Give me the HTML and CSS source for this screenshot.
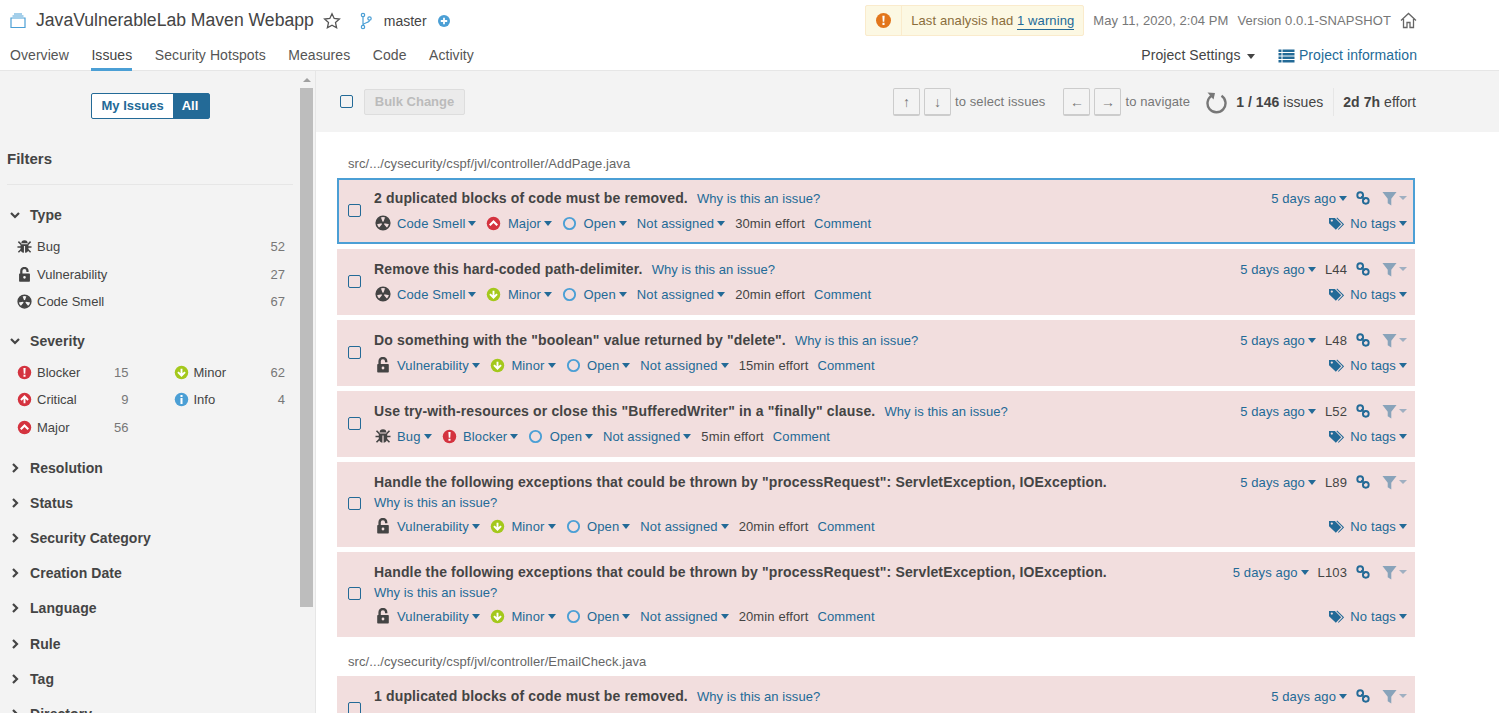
FILE: index.html
```html
<!DOCTYPE html>
<html lang="en">
<head>
    <meta charset="UTF-8">
    <title>Issues - JavaVulnerableLab Maven Webapp</title>
    <link rel="stylesheet" href="styles.css">
</head>
<body>

    <svg class="defs" width="0" height="0">
        <symbol id="i-bug" viewBox="0 0 16 16"><path d="M4.6 4.6a3.4 3.4 0 0 1 6.8 0z"/><path d="M3.8 5.6h8.4v5a4.2 4.2 0 0 1-3.6 4.1V7.5H7.4v7.2a4.2 4.2 0 0 1-3.6-4.1z"/><path d="M1.5 2.8l3 3M14.5 2.8l-3 3M.5 8.5h4M15.500 8.500h-4M1.5 14.2l3-3M14.5 14.2l-3-3" stroke="currentColor" stroke-width="1.6" fill="none"/></symbol>
        <symbol id="i-lock" viewBox="0 0 16 16"><path fill-rule="evenodd" d="M3 7h10a.8.8 0 0 1 .8.8v7a.8.8 0 0 1-.8.8H3a.8.8 0 0 1-.8-.8v-7A.8.8 0 0 1 3 7zM8 9.600a1.400 1.400 0 1 0 0 2.800 1.400 1.400 0 0 0 0-2.800z"/><path d="M4.600 7.500V4.300a3.300 3.300 0 0 1 6.600 0v.9" stroke="currentColor" stroke-width="2.400" fill="none"/></symbol>
        <symbol id="i-smell" viewBox="0 0 16 16"><circle cx="8" cy="8" r="6.8" fill="none" stroke="currentColor" stroke-width="1.6"/><circle cx="8" cy="8" r="1.5"/><path d="M8 8L5.78 1.89A6.500 6.500 0 0 0 1.6 9.13zM8 8l6.400 1.130A6.500 6.500 0 0 0 10.22 1.89zM8 8l4.180 4.980A6.500 6.500 0 0 1 3.820 12.980z"/></symbol>
        <symbol id="i-blocker" viewBox="0 0 16 16"><circle cx="8" cy="8" r="7.2" fill="#d4333f"/><path d="M6.8 3.200h2.400l-.4 6H7.200zM6.900 10.300h2.200v2.300H6.900z" fill="#fff"/></symbol>
        <symbol id="i-critical" viewBox="0 0 16 16"><circle cx="8" cy="8" r="7.2" fill="#d4333f"/><path d="M8 3.300l4.500 4.500-1.400 1.400L9 7.100v5H7v-5L4.900 9.200 3.500 7.800z" fill="#fff"/></symbol>
        <symbol id="i-major" viewBox="0 0 16 16"><circle cx="8" cy="8" r="7.2" fill="#d4333f"/><path d="M8 4.300l4.800 4.800-1.600 1.600L8 7.500l-3.200 3.200-1.600-1.600z" fill="#fff"/></symbol>
        <symbol id="i-minor" viewBox="0 0 16 16"><circle cx="8" cy="8" r="7.2" fill="#a4c81c"/><path d="M8 12.700L3.500 8.200l1.400-1.400L7 8.900v-5h2v5l2.100-2.100 1.400 1.400z" fill="#fff"/></symbol>
        <symbol id="i-info" viewBox="0 0 16 16"><circle cx="8" cy="8" r="7.2" fill="#4b9fd5"/><path d="M6.900 3.200h2.200v2.100H6.900zM6.900 6.500h2.200v6.200H6.900z" fill="#fff"/></symbol>
        <symbol id="i-open" viewBox="0 0 16 16"><circle cx="8" cy="8" r="6" fill="none" stroke="#4b9fd5" stroke-width="2"/></symbol>
        <symbol id="i-link" viewBox="0 0 16 16"><circle cx="4.800" cy="4.800" r="3.300" fill="none" stroke="#236a97" stroke-width="2.200"/><circle cx="11.200" cy="11.200" r="3.300" fill="none" stroke="#236a97" stroke-width="2.200"/><path d="M6 6l4 4" stroke="#236a97" stroke-width="1.600"/></symbol>
        <symbol id="i-filter" viewBox="0 0 16 16"><path d="M.5 1h15L9.900 8.200V15.500L6.100 13V8.200z"/></symbol>
        <symbol id="i-tag" viewBox="0 0 16 16"><path fill-rule="evenodd" d="M0 2h6.300l6.700 6.900-5.700 5.700L0 7.600zM3 3.700a1.200 1.200 0 1 0 0 2.400 1.200 1.200 0 0 0 0-2.400z"/><path d="M8.300 2l7 6.900-5.400 5.500" fill="none" stroke="currentColor" stroke-width="1.100"/></symbol>
    </svg>

    <header class="header">
        <div class="header-top">
            <svg class="qualifier" width="16" height="16" viewBox="0 0 16 16"><path d="M1 5h14v9.500H1zM2.500 3h11M4 1h8" fill="none" stroke="#4b9fd5" stroke-width="1.200"/></svg>
            <span class="project-name">JavaVulnerableLab Maven Webapp</span>
            <svg class="star" width="18" height="18" viewBox="0 0 18 18"><path d="M9 1.700l2.200 4.800 5.200.6-3.900 3.500 1.100 5.200L9 13.200l-4.600 2.600 1.100-5.200-3.900-3.500 5.200-.6z" fill="none" stroke="#555" stroke-width="1.300"/></svg>
            <svg class="branch-icon" width="12" height="18" viewBox="0 0 12 18"><g fill="none" stroke="#4b9fd5" stroke-width="1.200"><circle cx="3" cy="3" r="1.700"/><circle cx="3" cy="15" r="1.700"/><circle cx="9.500" cy="6.500" r="1.700"/><path d="M3 4.700v8.600M9.500 8.200c0 2.800-6.500 2.300-6.500 5.100"/></g></svg>
            <span class="branch-name">master</span>
            <svg class="plus" width="12" height="12" viewBox="0 0 12 12"><circle cx="6" cy="6" r="6" fill="#4b9fd5"/><path d="M2.800 6h6.400M6 2.800v6.400" stroke="#fff" stroke-width="1.800"/></svg>
            <div class="warning">
                <span class="warning-icon"><svg width="15" height="15" viewBox="0 0 16 16"><circle cx="8" cy="8" r="8" fill="#e2761c"/><path d="M6.800 3h2.400l-.4 6.200H7.200zM6.900 10.400h2.200v2.400H6.900z" fill="#fff"/></svg></span>
                <span class="warning-text">Last analysis had <a class="warning-link">1 warning</a></span>
            </div>
            <span class="meta-text date">May 11, 2020, 2:04 PM</span>
            <span class="meta-text version">Version 0.0.1-SNAPSHOT</span>
            <svg class="home" width="17" height="17" viewBox="0 0 17 17"><path d="M1 8.500L8.500 1.500 16 8.500M3.500 7v8.500h3.500v-5h3v5h3.500V7" fill="none" stroke="#666" stroke-width="1.300"/></svg>
        </div>
        <nav class="tabs">
            <a class="tab">Overview</a>
            <a class="tab tab-active">Issues</a>
            <a class="tab">Security Hotspots</a>
            <a class="tab">Measures</a>
            <a class="tab">Code</a>
            <a class="tab">Activity</a>
            <a class="tab tab-settings">Project Settings <i class="caret caret-dark"></i></a>
            <a class="tab tab-info">
                <svg width="17" height="14" viewBox="0 0 16 14"><path d="M0 .5h3v2.600H0zM4 .5h12v2.600H4zM0 4h3v2.600H0zM4 4h12v2.600H4zM0 7.500h3v2.600H0zM4 7.500h12v2.600H4zM0 11h3v2.600H0zM4 11h12v2.600H4z" fill="#236a97"/></svg>
                Project information
            </a>
        </nav>
    </header>

    <div class="page">
        <aside class="sidebar">
            <div class="side-content">
                <div class="toggle">
                    <span class="toggle-item">My Issues</span>
                    <span class="toggle-item toggle-on">All</span>
                </div>
                <h3 class="filters-title">Filters</h3>

                <div class="facet">
                    <div class="facet-head"><svg class="chev" width="10" height="10" viewBox="0 0 10 10"><path d="M1 3l4 4 4-4"/></svg>Type</div>
                    <div class="facet-row"><svg class="ico"><use href="#i-bug"/></svg><span class="facet-label">Bug</span><span class="count">52</span></div>
                    <div class="facet-row"><svg class="ico"><use href="#i-lock"/></svg><span class="facet-label">Vulnerability</span><span class="count">27</span></div>
                    <div class="facet-row"><svg class="ico"><use href="#i-smell"/></svg><span class="facet-label">Code Smell</span><span class="count">67</span></div>
                </div>

                <div class="facet">
                    <div class="facet-head"><svg class="chev" width="10" height="10" viewBox="0 0 10 10"><path d="M1 3l4 4 4-4"/></svg>Severity</div>
                    <div class="severity-grid">
                        <div class="facet-row"><svg class="ico"><use href="#i-blocker"/></svg><span class="facet-label">Blocker</span><span class="count">15</span></div>
                        <div class="facet-row"><svg class="ico"><use href="#i-minor"/></svg><span class="facet-label">Minor</span><span class="count">62</span></div>
                        <div class="facet-row"><svg class="ico"><use href="#i-critical"/></svg><span class="facet-label">Critical</span><span class="count">9</span></div>
                        <div class="facet-row"><svg class="ico"><use href="#i-info"/></svg><span class="facet-label">Info</span><span class="count">4</span></div>
                        <div class="facet-row"><svg class="ico"><use href="#i-major"/></svg><span class="facet-label">Major</span><span class="count">56</span></div>
                    </div>
                </div>

                <div class="closed-list">
                    <div class="facet-closed"><svg class="chev" width="10" height="10" viewBox="0 0 10 10"><path d="M3 1l4 4-4 4"/></svg>Resolution</div>
                    <div class="facet-closed"><svg class="chev" width="10" height="10" viewBox="0 0 10 10"><path d="M3 1l4 4-4 4"/></svg>Status</div>
                    <div class="facet-closed"><svg class="chev" width="10" height="10" viewBox="0 0 10 10"><path d="M3 1l4 4-4 4"/></svg>Security Category</div>
                    <div class="facet-closed"><svg class="chev" width="10" height="10" viewBox="0 0 10 10"><path d="M3 1l4 4-4 4"/></svg>Creation Date</div>
                    <div class="facet-closed"><svg class="chev" width="10" height="10" viewBox="0 0 10 10"><path d="M3 1l4 4-4 4"/></svg>Language</div>
                    <div class="facet-closed"><svg class="chev" width="10" height="10" viewBox="0 0 10 10"><path d="M3 1l4 4-4 4"/></svg>Rule</div>
                    <div class="facet-closed"><svg class="chev" width="10" height="10" viewBox="0 0 10 10"><path d="M3 1l4 4-4 4"/></svg>Tag</div>
                    <div class="facet-closed"><svg class="chev" width="10" height="10" viewBox="0 0 10 10"><path d="M3 1l4 4-4 4"/></svg>Directory</div>
                </div>
            </div>
            <div class="scrollbar">
                <i class="scroll-up"></i>
                <div class="scroll-thumb"></div>
            </div>
        </aside>

        <main class="main">
            <div class="toolbar">
                <span class="checkbox"></span>
                <button class="bulk" disabled>Bulk Change</button>
                <div class="toolbar-right">
                    <span class="key">↑</span>
                    <span class="key">↓</span>
                    <span class="hint">to select issues</span>
                    <span class="key key-nav">←</span>
                    <span class="key">→</span>
                    <span class="hint">to navigate</span>
                    <svg class="reload" width="22" height="24" viewBox="0 0 22 24"><path d="M6 5.500a9 9 0 1 0 9.500 .3" fill="none" stroke="#777" stroke-width="2.400"/><path d="M1.500 2.500l7.500 .5-1.500 6.500z" fill="#777"/></svg>
                    <span class="total"><b>1 / 146</b> issues</span>
                    <span class="total effort"><b>2d 7h</b> effort</span>
                </div>
            </div>

            <div class="issues">
                <div class="file-name">src/.../cysecurity/cspf/jvl/controller/AddPage.java</div>

                <div class="issue issue-selected">
                    <span class="checkbox"></span>
                    <div class="issue-body">
                        <div class="issue-title"><b>2 duplicated blocks of code must be removed.</b><a class="why">Why is this an issue?</a></div>
                        <div class="issue-meta">
                            <svg class="ico"><use href="#i-smell"/></svg><a>Code Smell</a><i class="caret"></i>
                            <svg class="ico"><use href="#i-major"/></svg><a>Major</a><i class="caret"></i>
                            <svg class="ico"><use href="#i-open"/></svg><a>Open</a><i class="caret"></i>
                            <a>Not assigned</a><i class="caret"></i>
                            <span class="effort-text">30min effort</span><a>Comment</a>
                        </div>
                    </div>
                    <div class="issue-side">
                        <div class="side-row"><a>5 days ago</a><i class="caret"></i><svg class="ico ico-link"><use href="#i-link"/></svg><svg class="ico ico-filter"><use href="#i-filter"/></svg><i class="caret caret-muted"></i></div>
                        <div class="side-row"><svg class="ico ico-tag"><use href="#i-tag"/></svg><a>No tags</a><i class="caret"></i></div>
                    </div>
                </div>

                <div class="issue">
                    <span class="checkbox"></span>
                    <div class="issue-body">
                        <div class="issue-title"><b>Remove this hard-coded path-delimiter.</b><a class="why">Why is this an issue?</a></div>
                        <div class="issue-meta">
                            <svg class="ico"><use href="#i-smell"/></svg><a>Code Smell</a><i class="caret"></i>
                            <svg class="ico"><use href="#i-minor"/></svg><a>Minor</a><i class="caret"></i>
                            <svg class="ico"><use href="#i-open"/></svg><a>Open</a><i class="caret"></i>
                            <a>Not assigned</a><i class="caret"></i>
                            <span class="effort-text">20min effort</span><a>Comment</a>
                        </div>
                    </div>
                    <div class="issue-side">
                        <div class="side-row"><a>5 days ago</a><i class="caret"></i><span class="line-no">L44</span><svg class="ico ico-link"><use href="#i-link"/></svg><svg class="ico ico-filter"><use href="#i-filter"/></svg><i class="caret caret-muted"></i></div>
                        <div class="side-row"><svg class="ico ico-tag"><use href="#i-tag"/></svg><a>No tags</a><i class="caret"></i></div>
                    </div>
                </div>

                <div class="issue">
                    <span class="checkbox"></span>
                    <div class="issue-body">
                        <div class="issue-title"><b>Do something with the "boolean" value returned by "delete".</b><a class="why">Why is this an issue?</a></div>
                        <div class="issue-meta">
                            <svg class="ico"><use href="#i-lock"/></svg><a>Vulnerability</a><i class="caret"></i>
                            <svg class="ico"><use href="#i-minor"/></svg><a>Minor</a><i class="caret"></i>
                            <svg class="ico"><use href="#i-open"/></svg><a>Open</a><i class="caret"></i>
                            <a>Not assigned</a><i class="caret"></i>
                            <span class="effort-text">15min effort</span><a>Comment</a>
                        </div>
                    </div>
                    <div class="issue-side">
                        <div class="side-row"><a>5 days ago</a><i class="caret"></i><span class="line-no">L48</span><svg class="ico ico-link"><use href="#i-link"/></svg><svg class="ico ico-filter"><use href="#i-filter"/></svg><i class="caret caret-muted"></i></div>
                        <div class="side-row"><svg class="ico ico-tag"><use href="#i-tag"/></svg><a>No tags</a><i class="caret"></i></div>
                    </div>
                </div>

                <div class="issue">
                    <span class="checkbox"></span>
                    <div class="issue-body">
                        <div class="issue-title"><b>Use try-with-resources or close this "BufferedWriter" in a "finally" clause.</b><a class="why">Why is this an issue?</a></div>
                        <div class="issue-meta">
                            <svg class="ico"><use href="#i-bug"/></svg><a>Bug</a><i class="caret"></i>
                            <svg class="ico"><use href="#i-blocker"/></svg><a>Blocker</a><i class="caret"></i>
                            <svg class="ico"><use href="#i-open"/></svg><a>Open</a><i class="caret"></i>
                            <a>Not assigned</a><i class="caret"></i>
                            <span class="effort-text">5min effort</span><a>Comment</a>
                        </div>
                    </div>
                    <div class="issue-side">
                        <div class="side-row"><a>5 days ago</a><i class="caret"></i><span class="line-no">L52</span><svg class="ico ico-link"><use href="#i-link"/></svg><svg class="ico ico-filter"><use href="#i-filter"/></svg><i class="caret caret-muted"></i></div>
                        <div class="side-row"><svg class="ico ico-tag"><use href="#i-tag"/></svg><a>No tags</a><i class="caret"></i></div>
                    </div>
                </div>

                <div class="issue">
                    <span class="checkbox"></span>
                    <div class="issue-body">
                        <div class="issue-title"><b>Handle the following exceptions that could be thrown by "processRequest": ServletException, IOException.</b><br><a class="why why-wrap">Why is this an issue?</a></div>
                        <div class="issue-meta">
                            <svg class="ico"><use href="#i-lock"/></svg><a>Vulnerability</a><i class="caret"></i>
                            <svg class="ico"><use href="#i-minor"/></svg><a>Minor</a><i class="caret"></i>
                            <svg class="ico"><use href="#i-open"/></svg><a>Open</a><i class="caret"></i>
                            <a>Not assigned</a><i class="caret"></i>
                            <span class="effort-text">20min effort</span><a>Comment</a>
                        </div>
                    </div>
                    <div class="issue-side">
                        <div class="side-row"><a>5 days ago</a><i class="caret"></i><span class="line-no">L89</span><svg class="ico ico-link"><use href="#i-link"/></svg><svg class="ico ico-filter"><use href="#i-filter"/></svg><i class="caret caret-muted"></i></div>
                        <div class="side-row"><svg class="ico ico-tag"><use href="#i-tag"/></svg><a>No tags</a><i class="caret"></i></div>
                    </div>
                </div>

                <div class="issue">
                    <span class="checkbox"></span>
                    <div class="issue-body">
                        <div class="issue-title"><b>Handle the following exceptions that could be thrown by "processRequest": ServletException, IOException.</b><br><a class="why why-wrap">Why is this an issue?</a></div>
                        <div class="issue-meta">
                            <svg class="ico"><use href="#i-lock"/></svg><a>Vulnerability</a><i class="caret"></i>
                            <svg class="ico"><use href="#i-minor"/></svg><a>Minor</a><i class="caret"></i>
                            <svg class="ico"><use href="#i-open"/></svg><a>Open</a><i class="caret"></i>
                            <a>Not assigned</a><i class="caret"></i>
                            <span class="effort-text">20min effort</span><a>Comment</a>
                        </div>
                    </div>
                    <div class="issue-side">
                        <div class="side-row"><a>5 days ago</a><i class="caret"></i><span class="line-no">L103</span><svg class="ico ico-link"><use href="#i-link"/></svg><svg class="ico ico-filter"><use href="#i-filter"/></svg><i class="caret caret-muted"></i></div>
                        <div class="side-row"><svg class="ico ico-tag"><use href="#i-tag"/></svg><a>No tags</a><i class="caret"></i></div>
                    </div>
                </div>

                <div class="file-name file-next">src/.../cysecurity/cspf/jvl/controller/EmailCheck.java</div>

                <div class="issue">
                    <span class="checkbox"></span>
                    <div class="issue-body">
                        <div class="issue-title"><b>1 duplicated blocks of code must be removed.</b><a class="why">Why is this an issue?</a></div>
                        <div class="issue-meta">
                            <svg class="ico"><use href="#i-smell"/></svg><a>Code Smell</a><i class="caret"></i>
                            <svg class="ico"><use href="#i-major"/></svg><a>Major</a><i class="caret"></i>
                            <svg class="ico"><use href="#i-open"/></svg><a>Open</a><i class="caret"></i>
                            <a>Not assigned</a><i class="caret"></i>
                            <span class="effort-text">20min effort</span><a>Comment</a>
                        </div>
                    </div>
                    <div class="issue-side">
                        <div class="side-row"><a>5 days ago</a><i class="caret"></i><svg class="ico ico-link"><use href="#i-link"/></svg><svg class="ico ico-filter"><use href="#i-filter"/></svg><i class="caret caret-muted"></i></div>
                        <div class="side-row"><svg class="ico ico-tag"><use href="#i-tag"/></svg><a>No tags</a><i class="caret"></i></div>
                    </div>
                </div>
            </div>
        </main>
    </div>

</body>
</html>
```

FILE: styles.css
```css
* {
    box-sizing: border-box;
}
body {
    font-family: "Liberation Sans", Arial, sans-serif;
    font-size: 14px;
    color: #444;
    margin: 0;
    height: 713px;
    overflow: hidden;
    background: white;
}
.defs {
    position: absolute;
}
a {
    color: #236a97;
}

/* header */
.header {
    height: 71px;
    padding: 0 82px 0 10px;
    border-bottom: 1px solid #e6e6e6;
}
.header-top {
    display: flex;
    align-items: center;
    height: 41px;
}
.qualifier {
    margin-right: 10px;
}
.project-name {
    font-size: 17.6px;
}
.star {
    margin-left: 9px;
}
.branch-icon {
    margin-left: 19px;
}
.branch-name {
    margin-left: 12px;
}
.plus {
    margin-left: 11px;
}
.warning {
    display: flex;
    align-items: stretch;
    height: 31px;
    margin-left: auto;
    background: #fcf8e3;
    border: 1px solid #faebcc;
    border-radius: 2px;
}
.warning-icon {
    display: flex;
    align-items: center;
    width: 36px;
    justify-content: center;
    border-right: 1px solid #faebcc;
}
.warning-text {
    padding: 0 9px;
    line-height: 29px;
    font-size: 13px;
    letter-spacing: 0.1px;
    color: #8a6d3b;
}
.warning-link {
    border-bottom: 1px solid #236a97;
    padding-bottom: 1px;
}
.meta-text {
    font-size: 13px;
    letter-spacing: 0.08px;
    color: #777;
}
.date {
    margin-left: 9px;
}
.version {
    margin-left: 9px;
}
.home {
    margin-left: 9px;
}
.tabs {
    display: flex;
    gap: 22.5px;
    height: 29px;
    letter-spacing: 0.07px;
}
.tab {
    color: #555;
    line-height: 29px;
    height: 30px;
}
.tab-active {
    color: #444;
    border-bottom: 3px solid #4b9fd5;
}
.tab-settings {
    margin-left: auto;
    color: #444;
}
.tab-info {
    color: #236a97;
    display: flex;
    align-items: center;
    gap: 4px;
    height: 29px;
}
.caret {
    display: inline-block;
    flex-shrink: 0;
    width: 0;
    height: 0;
    margin-left: 3px;
    border-left: 4.5px solid transparent;
    border-right: 4.5px solid transparent;
    border-top: 5px solid #236a97;
    vertical-align: middle;
}
.caret-dark {
    border-top-color: #444;
}
.caret-muted {
    border-left-width: 4px;
    border-right-width: 4px;
    border-top: 4px solid #236a97;
    opacity: 0.4;
    margin-left: 2px;
}

/* sidebar */
.page {
    display: flex;
    height: 642px;
}
.sidebar {
    display: flex;
    width: 316px;
    flex-shrink: 0;
    background: #f3f3f3;
    border-right: 1px solid #e6e6e6;
    overflow: hidden;
}
.side-content {
    width: 300px;
    flex-shrink: 0;
    padding: 22px 7px 0;
}
.toggle {
    display: flex;
    width: 119px;
    height: 26px;
    margin: 0 auto;
    border: 1px solid #236a97;
    border-radius: 2px;
    font-size: 13px;
    font-weight: bold;
    color: #236a97;
    background: white;
    line-height: 24px;
}
.toggle-item {
    padding: 0 9px 0 10px;
}
.toggle-on {
    flex: 1;
    background: #236a97;
    color: white;
    padding-left: 9px;
}
.filters-title {
    font-size: 15px;
    margin: 32px 0 0;
    height: 34px;
    line-height: 16px;
    border-bottom: 1px solid #e6e6e6;
}
.facet {
    padding-right: 8px;
}
.facet-head {
    display: flex;
    align-items: center;
    font-weight: bold;
    letter-spacing: 0.06px;
    height: 20px;
    margin-top: 20px;
    padding-left: 3px;
}
.facet + .facet .facet-head {
    margin-top: 15px;
}
.closed-list {
    margin-top: 9px;
}
.facet-closed {
    display: flex;
    align-items: center;
    height: 35.2px;
    font-weight: bold;
    letter-spacing: 0.06px;
    padding-left: 3px;
}
.chev {
    margin-right: 10px;
    flex-shrink: 0;
    fill: none;
    stroke: #444;
    stroke-width: 2.2;
}
.facet-row {
    display: flex;
    align-items: center;
    height: 27.5px;
    padding-left: 10px;
    font-size: 13px;
}
.facet-head + .facet-row,
.facet-head + .severity-grid {
    margin-top: 8px;
}
.severity-grid {
    display: grid;
    grid-template-columns: 1fr 1fr;
    column-gap: 35px;
}
.facet-label {
    margin-left: 5px;
}
.count {
    margin-left: auto;
    color: #777;
}
.ico {
    width: 15px;
    height: 15px;
    flex-shrink: 0;
    fill: currentColor;
    color: #444;
}
.scrollbar {
    width: 13px;
    flex-shrink: 0;
}
.scroll-up {
    display: block;
    width: 0;
    height: 0;
    margin: 7px auto 6px;
    border-left: 4px solid transparent;
    border-right: 4px solid transparent;
    border-bottom: 4px solid #a0a0a0;
}
.scroll-thumb {
    height: 519px;
    background: #bdbdbd;
}

/* toolbar */
.main {
    flex: 1;
    overflow: hidden;
}
.toolbar {
    display: flex;
    align-items: center;
    height: 61px;
    padding: 0 83px 0 24px;
    background: #f3f3f3;
}
.checkbox {
    display: block;
    width: 13px;
    height: 13px;
    flex-shrink: 0;
    border: 1px solid #236a97;
    border-radius: 2px;
    margin-bottom: 2px;
}
.toolbar .checkbox {
    margin-bottom: 0;
}
.bulk {
    margin-left: 11px;
    width: 101px;
    height: 26px;
    padding: 0;
    font-family: inherit;
    font-size: 13px;
    font-weight: bold;
    color: #bbb;
    background: #ebebeb;
    border: 1px solid #ddd;
    border-radius: 2px;
}
.toolbar-right {
    display: flex;
    align-items: center;
    margin-left: auto;
}
.key {
    display: block;
    width: 27px;
    height: 28px;
    margin-right: 4px;
    border: 1px solid #ccc;
    border-bottom-width: 2px;
    border-radius: 2px;
    background: #f3f3f3;
    color: #777;
    text-align: center;
    line-height: 26px;
}
.key-nav {
    margin-left: 18px;
}
.hint {
    font-size: 13px;
    letter-spacing: 0.1px;
    color: #777;
}
.reload {
    margin-left: 16px;
    margin-right: 8px;
}
.total {
    letter-spacing: 0.05px;
}
.effort {
    margin-left: 10px;
    padding-left: 9px;
    border-left: 1px solid #e6e6e6;
    line-height: 28px;
}

/* issues */
.issues {
    padding: 24px 84px 0 21px;
}
.file-name {
    height: 16px;
    margin-bottom: 6px;
    padding-left: 11px;
    font-size: 13px;
    letter-spacing: 0.08px;
    line-height: 16px;
    color: #666;
}
.file-next {
    margin-top: 17px;
}
.issue {
    display: flex;
    align-items: center;
    min-height: 66px;
    margin-bottom: 5px;
    padding: 8px 6px 8px 9px;
    background: #f2dede;
    border: 2px solid transparent;
}
.issue:has(br) {
    min-height: 85px;
}
.issue-selected {
    border-color: #4b9fd5;
}
.issue-body {
    flex: 1;
    align-self: flex-start;
    margin-left: 13px;
}
.issue-title {
    font-size: 14px;
    line-height: 20px;
    margin-bottom: 4px;
}
.issue-title b {
    letter-spacing: 0.15px;
}
.issue-title:has(br) {
    line-height: 19.5px;
    padding-top: 1px;
    margin-bottom: 4px;
}
.why {
    margin-left: 9px;
    font-size: 13px;
    letter-spacing: 0.06px;
}
.why-wrap {
    margin-left: 0;
}
.issue-meta {
    display: flex;
    align-items: center;
    height: 20px;
    font-size: 13px;
    letter-spacing: 0.12px;
}
.issue-meta .ico {
    margin-right: 6.5px;
}
.issue-meta .ico:first-child {
    width: 16px;
    height: 16px;
    margin-left: 1px;
    margin-right: 6px;
}
.issue-meta .caret {
    margin-right: 10px;
}
.effort-text {
    margin-right: 9px;
}
.issue-side {
    display: flex;
    flex-direction: column;
    justify-content: space-between;
    align-self: stretch;
    font-size: 13px;
    letter-spacing: 0.12px;
    padding-bottom: 1px;
}
.side-row {
    display: flex;
    align-items: center;
    justify-content: flex-end;
    height: 20px;
}
.line-no {
    margin-left: 9px;
}
.ico-link {
    margin-left: 9px;
    width: 14px;
    height: 14px;
}
.ico-filter {
    margin-left: 12px;
    color: #236a97;
    opacity: 0.5;
}
.ico-tag {
    margin-right: 6px;
    color: #236a97;
}
```
